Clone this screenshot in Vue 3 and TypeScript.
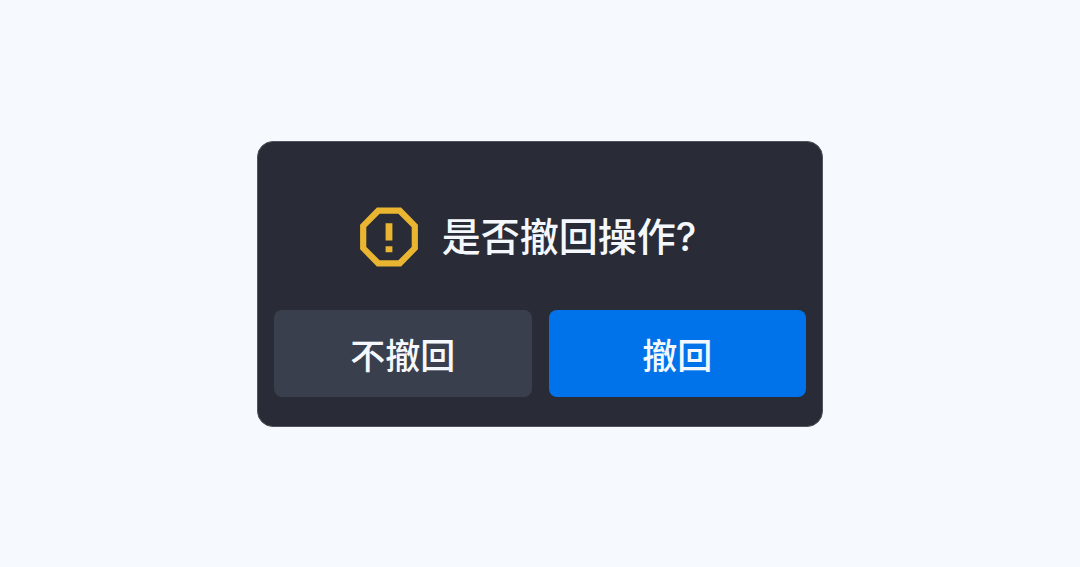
<script setup lang="ts">
import { ref } from 'vue'

const open = ref<boolean>(true)
const close = (): void => {
  open.value = false
}
</script>

<template>
  <main class="page">
    <section v-if="open" class="dialog" role="alertdialog" aria-labelledby="dialog-title">
      <div class="message">
        <svg class="icon" viewBox="0 0 58 60" aria-hidden="true">
          <path d="M18.2 3.7H39.8L54.8 18.9V41.1L39.8 56.3H18.2L3.2 41.1V18.9Z" fill="none" stroke="#eab530" stroke-width="6.2" />
          <path d="M25.6 16.2H32.4V33.6H25.6ZM25.6 39.2H32.4V45.2H25.6Z" fill="#eab530" />
        </svg>
        <h1 id="dialog-title" class="title">是否撤回操作?</h1>
      </div>
      <div class="actions">
        <button type="button" class="button" @click="close">不撤回</button>
        <button type="button" class="button primary" @click="close">撤回</button>
      </div>
    </section>
  </main>
</template>

<style>
body {
  background: #f6f9fd;
}
</style>

<style scoped>
.page {
  display: grid;
  place-items: center;
  min-height: 100vh;
  padding: 17px 16px 16px;
  box-sizing: border-box;
  font-family: Inter, "Noto Sans CJK SC", sans-serif;
}
.dialog {
  width: 100%;
  max-width: 566px;
  box-sizing: border-box;
  padding: 65px 16px 29px;
  border: 1px solid #50535e;
  border-radius: 16px;
  background: #292c37;
}
.message {
  display: flex;
  align-items: center;
  justify-content: center;
  gap: 24px;
  padding-right: 24px;
}
.icon {
  width: 58px;
  height: 60px;
}
.title {
  margin: 0;
  color: #f4f8fd;
  font-size: 39px;
  font-weight: 500;
  line-height: 60px;
}
.actions {
  display: grid;
  grid-template-columns: 1fr 1fr;
  gap: 17px;
  margin-top: 43px;
}
.button {
  height: 87px;
  padding: 0;
  border: 0;
  border-radius: 8px;
  background: #393f4d;
  color: #f4f8fd;
  font-family: inherit;
  font-size: 35px;
  font-weight: 500;
  cursor: pointer;
}
.primary {
  background: #0073eb;
}
</style>
